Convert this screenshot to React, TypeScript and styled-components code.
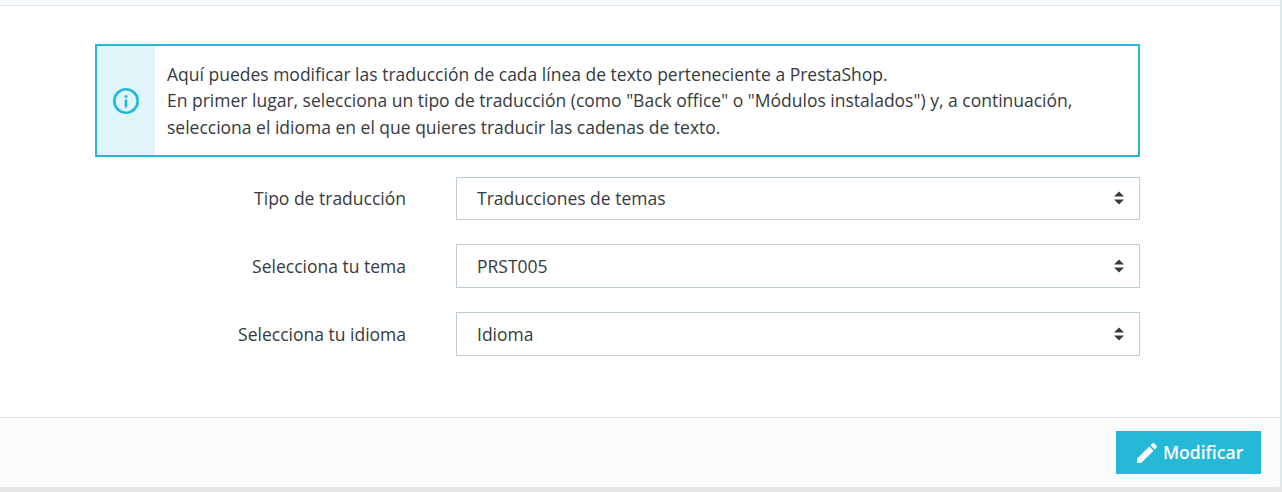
import React from "react";
import styled, { createGlobalStyle } from "styled-components";

const Global = createGlobalStyle`
  html, body { margin: 0; padding: 0; background: #e9e9e9; }
  body { font-family: "Open Sans", "Liberation Sans", sans-serif; color: #363a41; }
`;

const Page = styled.div`
  width: 1282px;
  height: 492px;
  overflow: hidden;
  background: #e6e7e7;
`;

const Card = styled.div`
  width: 1282px;
  height: 487px;
  box-sizing: border-box;
  border-right: 2px solid #dfe8ea;
  border-bottom-right-radius: 4px;
  background: #fff;
  display: flex;
  flex-direction: column;
`;

const TopStrip = styled.div`
  height: 6px;
  box-sizing: border-box;
  flex: none;
  background: #fafbfc;
  border-bottom: 1px solid #dfe8ea;
`;

const Body = styled.div`
  flex: 1;
  padding: 38px 140px 0 95px;
  display: flex;
  flex-direction: column;
`;

const Alert = styled.div`
  display: flex;
  height: 113px;
  box-sizing: border-box;
  border: 2px solid #25b9d7;
`;

const AlertIcon = styled.div`
  width: 58px;
  flex: none;
  background: #dff5f9;
  color: #25b9d7;
  display: flex;
  align-items: center;
  justify-content: center;
`;

const AlertText = styled.div`
  padding: 15px 12px;
  font-size: 17.5px;
  line-height: 26.25px;
  color: #363a41;
  white-space: nowrap;
`;

const Row = styled.div<{ $h: number; $top: number }>`
  display: flex;
  height: ${(p) => p.$h}px;
  margin-top: ${(p) => p.$top}px;
  align-items: center;
`;

const Label = styled.label<{ $lift: number }>`
  width: 311px;
  flex: none;
  text-align: right;
  font-size: 17.5px;
  margin-right: 50px;
  padding-bottom: ${(p) => p.$lift}px;
`;

const SelectBox = styled.div<{ $lift: number }>`
  flex: 1;
  height: 100%;
  box-sizing: border-box;
  border: 1px solid #bbcdd2;
  display: flex;
  align-items: center;
  justify-content: space-between;
  padding: 0 15px ${(p) => p.$lift}px 20px;
  font-size: 17.5px;
  color: #363a41;
`;

const Footer = styled.div`
  height: 70px;
  flex: none;
  box-sizing: border-box;
  background: #fafbfc;
  border-top: 1px solid #dfe3e4;
  display: flex;
  justify-content: flex-end;
  align-items: flex-start;
  padding: 13px 19px 0 0;
  border-bottom-right-radius: 4px;
`;

const Button = styled.button`
  width: 145px;
  height: 43px;
  border: none;
  border-radius: 0;
  background: #25b9d7;
  color: #fff;
  font-family: inherit;
  font-size: 17.5px;
  font-weight: 600;
  display: flex;
  align-items: center;
  justify-content: flex-start;
  gap: 6px;
  padding: 0 0 1px 21px;
`;

const PencilSvg = styled.svg`
  margin-top: 2px;
  flex: none;
`;

const Arrows = () => (
  <svg width="10" height="14" viewBox="0 0 10 14" fill="#363a41">
    <path d="M5 0.5 L10 5.5 H0 Z" />
    <path d="M0 8.5 H10 L5 13.5 Z" />
  </svg>
);

const InfoIcon = () => (
  <svg width="28" height="28" viewBox="0 0 28 28" fill="none" stroke="currentColor">
    <circle cx="14" cy="14" r="11.7" strokeWidth="2.6" />
    <circle cx="14" cy="9.6" r="1.5" fill="currentColor" stroke="none" />
    <rect x="12.7" y="12.5" width="2.6" height="8" fill="currentColor" stroke="none" />
  </svg>
);

const PencilIcon = () => (
  <PencilSvg width="20" height="20" viewBox="3 3 18 18" fill="#fff">
    <path d="M3 17.25V21h3.75L17.81 9.94l-3.75-3.75L3 17.25zM20.71 7.04a1 1 0 0 0 0-1.41l-2.34-2.34a1 1 0 0 0-1.41 0l-1.83 1.83 3.75 3.75 1.83-1.83z" />
  </PencilSvg>
);

const fields = [
  { label: "Tipo de traducción", value: "Traducciones de temas", h: 43, top: 20, lift: 1 },
  { label: "Selecciona tu tema", value: "PRST005", h: 44, top: 24, lift: 0 },
  { label: "Selecciona tu idioma", value: "Idioma", h: 44, top: 24, lift: 0 },
];

export default function App() {
  return (
    <Page>
      <Global />
      <Card>
        <TopStrip />
        <Body>
          <Alert>
            <AlertIcon>
              <InfoIcon />
            </AlertIcon>
            <AlertText>
              Aquí puedes modificar las traducción de cada línea de texto perteneciente a PrestaShop.
              <br />
              En primer lugar, selecciona un tipo de traducción (como "Back office" o "Módulos instalados") y, a continuación,
              <br />
              selecciona el idioma en el que quieres traducir las cadenas de texto.
            </AlertText>
          </Alert>
          {fields.map((f) => (
            <Row key={f.label} $h={f.h} $top={f.top}>
              <Label $lift={f.lift}>{f.label}</Label>
              <SelectBox $lift={f.lift}>
                <span>{f.value}</span>
                <Arrows />
              </SelectBox>
            </Row>
          ))}
        </Body>
        <Footer>
          <Button>
            <PencilIcon />
            Modificar
          </Button>
        </Footer>
      </Card>
    </Page>
  );
}
